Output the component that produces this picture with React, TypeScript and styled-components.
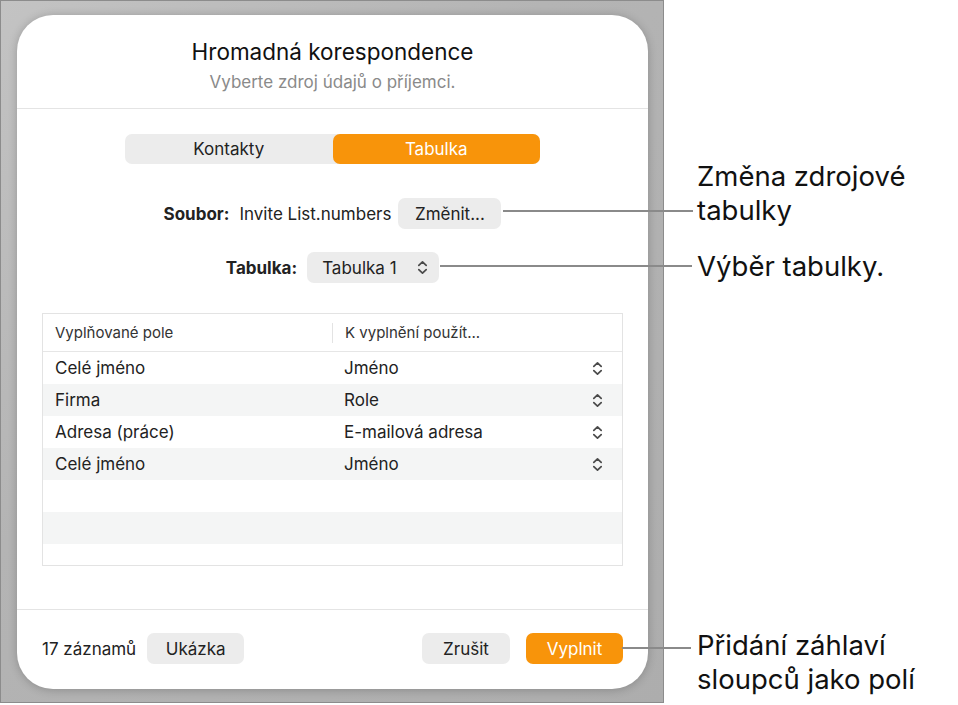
import React from 'react';
import styled, { createGlobalStyle } from 'styled-components';

const GlobalStyle = createGlobalStyle`
  * { box-sizing: border-box; }
  body {
    margin: 0;
    background: #ffffff;
    font-family: Inter, "Liberation Sans", sans-serif;
    color: #1d1d1f;
  }
`;

const Page = styled.div`
  position: relative;
  display: flex;
  width: 958px;
  height: 705px;
  overflow: hidden;
`;

const Frame = styled.div`
  width: 664px;
  height: 703px;
  flex-shrink: 0;
  border: 1px solid #8c8c8c;
  padding: 14px 15px 13px 16px;
  background: linear-gradient(135deg, #c3c3c3 0%, #b4b4b4 40%, #adadad 100%);
  display: flex;
`;

const Card = styled.div`
  flex: 1;
  display: flex;
  flex-direction: column;
  background: #ffffff;
  border-radius: 36px;
  box-shadow: 0 1px 10px rgba(0, 0, 0, 0.22);
  overflow: hidden;
`;

const Header = styled.div`
  display: flex;
  flex-direction: column;
  align-items: center;
  gap: 5px;
  padding: 23px 0 15px;
  border-bottom: 1px solid #e4e4e4;
`;

const Title = styled.div`
  font-size: 22.5px;
  line-height: 28px;
  color: #111;
`;

const Subtitle = styled.div`
  font-size: 17px;
  line-height: 22px;
  color: #8a8a8a;
`;

const Body = styled.div`
  flex: 1;
  display: flex;
  flex-direction: column;
  align-items: center;
  padding: 25px 25px 0;
`;

const Segmented = styled.div`
  display: flex;
  width: 415px;
  height: 30px;
  background: #ececec;
  border-radius: 7px;
`;

const Segment = styled.div<{ $active?: boolean }>`
  flex: 1;
  display: flex;
  align-items: center;
  justify-content: center;
  font-size: 17px;
  border-radius: 7px;
  color: ${p => (p.$active ? '#ffffff' : '#222')};
  background: ${p => (p.$active ? '#f8940a' : 'transparent')};
`;

const FieldRow = styled.div<{ $top: number }>`
  display: flex;
  align-items: center;
  margin-top: ${p => p.$top}px;
  font-size: 17px;
  color: #222;
`;

const FieldLabel = styled.span`
  font-weight: 700;
  margin-right: 10px;
`;

const FileName = styled.span`
  margin-right: 7px;
`;

const Button = styled.div<{ $primary?: boolean; $w: number }>`
  display: inline-flex;
  align-items: center;
  justify-content: center;
  flex-shrink: 0;
  height: 31px;
  width: ${p => p.$w}px;
  border-radius: 7px;
  font-size: 17px;
  color: ${p => (p.$primary ? '#ffffff' : '#222')};
  background: ${p => (p.$primary ? '#f8940a' : '#ececec')};
`;

const Popup = styled.div`
  display: flex;
  align-items: center;
  justify-content: space-between;
  width: 132px;
  height: 31px;
  padding: 0 11px 0 15px;
  border-radius: 7px;
  background: #ececec;
  font-size: 17px;
  color: #222;
`;

const Table = styled.div`
  align-self: stretch;
  margin-top: 30px;
  height: 253px;
  border: 1px solid #e3e3e3;
  overflow: hidden;
`;

const HeadRow = styled.div`
  display: grid;
  grid-template-columns: 289px 1fr;
  align-items: center;
  height: 38px;
  border-bottom: 1px solid #e6e6e6;
  font-size: 15px;
  color: #333;
`;

const HeadCell = styled.div<{ $divider?: boolean }>`
  padding-left: 12px;
  line-height: 20px;
  border-left: ${p => (p.$divider ? '1px solid #e3e3e3' : 'none')};
`;

const Row = styled.div<{ $alt?: boolean }>`
  display: grid;
  grid-template-columns: 289px 1fr 30px;
  align-items: center;
  height: 32px;
  background: ${p => (p.$alt ? '#f4f5f5' : '#ffffff')};
  font-size: 17px;
  color: #222;
`;

const Cell = styled.div`
  padding-left: 12px;
`;

const ChevronCell = styled.div`
  display: flex;
  align-items: center;
`;

const Footer = styled.div`
  display: flex;
  align-items: center;
  gap: 16px;
  padding: 23px 25px 25px;
  border-top: 1px solid #e4e4e4;
`;

const Count = styled.span`
  font-size: 17px;
  color: #222;
  margin-right: -5px;
`;

const Spacer = styled.div`
  flex: 1;
`;

const Callouts = styled.div`
  display: flex;
  flex-direction: column;
  padding-left: 33px;
`;

const CalloutText = styled.div<{ $top: number }>`
  margin-top: ${p => p.$top}px;
  font-size: 27.5px;
  line-height: 34px;
  color: #111;
  white-space: nowrap;
`;

const Leader = styled.div<{ $x: number; $y: number; $w: number }>`
  position: absolute;
  left: ${p => p.$x}px;
  top: ${p => p.$y}px;
  width: ${p => p.$w}px;
  height: 2px;
  background: #8a8a8a;
`;

const UpDown = () => (
  <svg width="11" height="15" viewBox="0 0 11 15" fill="none">
    <path d="M1.8 5.4 L5.5 1.8 L9.2 5.4" stroke="#4a4a4a" strokeWidth="1.7" strokeLinecap="round" strokeLinejoin="round" />
    <path d="M1.8 9.6 L5.5 13.2 L9.2 9.6" stroke="#4a4a4a" strokeWidth="1.7" strokeLinecap="round" strokeLinejoin="round" />
  </svg>
);

const mappings: [string, string][] = [
  ['Celé jméno', 'Jméno'],
  ['Firma', 'Role'],
  ['Adresa (práce)', 'E-mailová adresa'],
  ['Celé jméno', 'Jméno'],
  ['', ''],
  ['', ''],
  ['', ''],
];

const App: React.FC = () => (
  <Page>
    <GlobalStyle />
    <Frame>
      <Card>
        <Header>
          <Title>Hromadná korespondence</Title>
          <Subtitle>Vyberte zdroj údajů o příjemci.</Subtitle>
        </Header>
        <Body>
          <Segmented>
            <Segment>Kontakty</Segment>
            <Segment $active>Tabulka</Segment>
          </Segmented>
          <FieldRow $top={34}>
            <FieldLabel>Soubor:</FieldLabel>
            <FileName>Invite List.numbers</FileName>
            <Button $w={103}>Změnit...</Button>
          </FieldRow>
          <FieldRow $top={23}>
            <FieldLabel>Tabulka:</FieldLabel>
            <Popup>
              Tabulka 1
              <UpDown />
            </Popup>
          </FieldRow>
          <Table>
            <HeadRow>
              <HeadCell>Vyplňované pole</HeadCell>
              <HeadCell $divider>K vyplnění použít...</HeadCell>
            </HeadRow>
            {mappings.map(([field, source], i) => (
              <Row key={i} $alt={i % 2 === 1}>
                <Cell>{field}</Cell>
                <Cell>{source}</Cell>
                <ChevronCell>{field && <UpDown />}</ChevronCell>
              </Row>
            ))}
          </Table>
        </Body>
        <Footer>
          <Count>17 záznamů</Count>
          <Button $w={97}>Ukázka</Button>
          <Spacer />
          <Button $w={88}>Zrušit</Button>
          <Button $primary $w={97}>Vyplnit</Button>
        </Footer>
      </Card>
    </Frame>
    <Callouts>
      <CalloutText $top={159}>
        Změna zdrojové
        <br />
        tabulky
      </CalloutText>
      <CalloutText $top={22}>Výběr tabulky.</CalloutText>
      <CalloutText $top={345}>
        Přidání záhlaví
        <br />
        sloupců jako polí
      </CalloutText>
    </Callouts>
    <Leader $x={503} $y={210} $w={190} />
    <Leader $x={440} $y={265} $w={252} />
    <Leader $x={622} $y={647} $w={69} />
  </Page>
);

export default App;
